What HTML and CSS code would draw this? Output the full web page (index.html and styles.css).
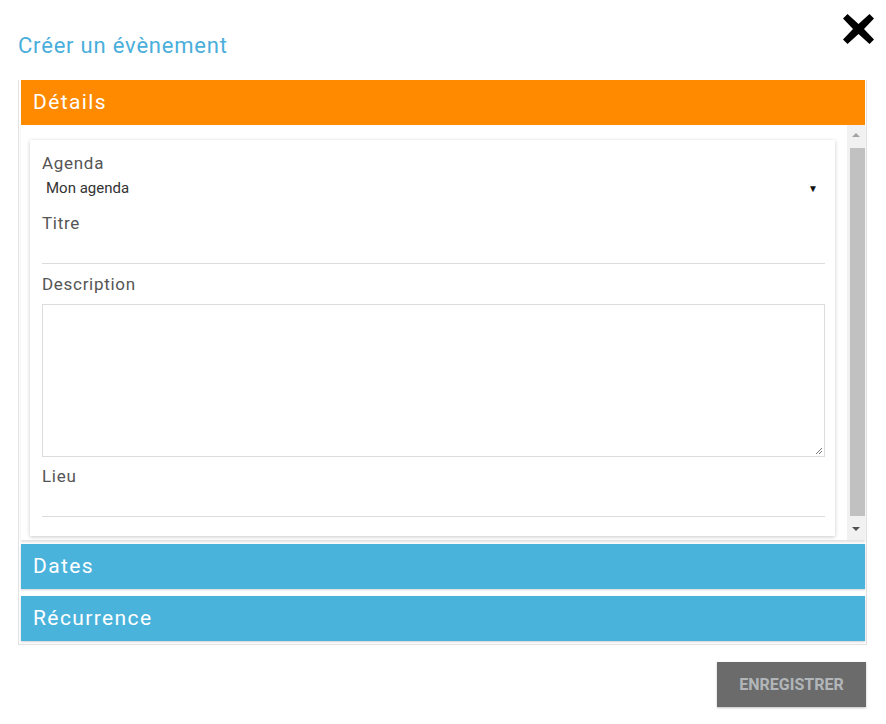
FILE: index.html
```html
<!DOCTYPE html>
<html lang="fr">
<head>
<meta charset="utf-8">
<title>Créer un évènement</title>
<link rel="stylesheet" href="styles.css">
</head>
<body>
<div class="dialog">
  <div class="dialog-head">
    <h1 class="dialog-title">Créer un évènement</h1>
    <button class="close-btn" aria-label="Fermer">
      <svg width="31" height="30" viewBox="0 0 31 30"><path d="M4.5 0 L15.5 10 L26.5 0 L31 4.5 L21 15 L31 25.5 L26.5 30 L15.5 20 L4.5 30 L0 25.5 L10 15 L0 4.5 Z" fill="#000"/></svg>
    </button>
  </div>
  <div class="accordion">
    <section class="panel">
      <div class="panel-head orange">Détails</div>
      <div class="panel-body">
        <div class="scroll-area">
          <div class="card">
            <label class="field-label">Agenda</label>
            <div class="select-row"><span>Mon agenda</span><span class="caret">▼</span></div>
            <label class="field-label spaced">Titre</label>
            <div class="line-input"></div>
            <label class="field-label spaced-sm">Description</label>
            <div class="textarea"><svg class="grip" width="8" height="8" viewBox="0 0 8 8"><path d="M7 1 L1 7 M7 4 L4 7" stroke="#777" stroke-width="1"/></svg></div>
            <label class="field-label spaced-xs">Lieu</label>
            <div class="line-input"></div>
          </div>
        </div>
        <div class="scrollbar">
          <div class="sb-arrow up"></div>
          <div class="sb-thumb"></div>
          <div class="sb-arrow down"></div>
        </div>
      </div>
    </section>
    <section class="panel gap-sm">
      <div class="panel-head blue">Dates</div>
    </section>
    <section class="panel gap-md">
      <div class="panel-head blue">Récurrence</div>
    </section>
  </div>
  <div class="actions">
    <button class="save-btn">ENREGISTRER</button>
  </div>
</div>
</body>
</html>
```
FILE: styles.css
```css
html, body {
  margin: 0;
  padding: 0;
  background: #fff;
}
body {
  font-family: Roboto, "Liberation Sans", Arial, sans-serif;
  width: 886px;
  height: 724px;
  overflow: hidden;
}
.dialog {
  padding: 0 19px 0 18px;
}
.dialog-head {
  height: 80px;
  display: flex;
  justify-content: space-between;
  align-items: flex-start;
}
.dialog-title {
  margin: 32px 0 0 0;
  font-size: 22px;
  line-height: 28px;
  font-weight: 400;
  letter-spacing: 0.8px;
  color: #4aaedb;
}
.close-btn {
  margin: 14px -7px 0 0;
  padding: 0;
  border: 0;
  background: none;
  display: block;
  line-height: 0;
}
.accordion {
  border: 1px solid #e2e2e2;
  border-top: 0;
  padding: 0 1px 3px 2px;
}
.panel-head {
  height: 45px;
  line-height: 45px;
  padding-left: 12px;
  color: #fff;
  font-size: 21px;
  letter-spacing: 1.4px;
  font-weight: 400;
}
.orange { background: #ff8a00; }
.blue {
  background: #4ab3dc;
  box-shadow: 0 1px 2px rgba(0,0,0,0.18);
}
.gap-sm { margin-top: 4px; }
.gap-md { margin-top: 7px; }
.panel-body {
  height: 415px;
  display: flex;
  box-shadow: 0 2px 2px rgba(0,0,0,0.12);
}
.scroll-area {
  flex: 1;
  overflow: hidden;
  padding: 15px 0 0 9px;
}
.card {
  width: 805px;
  height: 396px;
  box-sizing: border-box;
  background: #fff;
  box-shadow: 0 1px 4px rgba(0,0,0,0.22);
  padding: 13px 10px 0 12px;
  display: flex;
  flex-direction: column;
}
.field-label {
  font-size: 17px;
  line-height: 20px;
  letter-spacing: 0.7px;
  color: #555;
}
.spaced { margin-top: 15px; }
.spaced-sm { margin-top: 10px; }
.spaced-xs { margin-top: 9px; }
.select-row {
  margin-top: 5px;
  height: 20px;
  display: flex;
  justify-content: space-between;
  align-items: center;
  font-size: 15px;
  color: #333;
  padding: 0 7px 0 4px;
}
.caret {
  font-size: 10px;
  color: #111;
}
.line-input {
  height: 30px;
  border-bottom: 1px solid #dcdcdc;
}
.textarea {
  margin-top: 10px;
  height: 151px;
  border: 1px solid #dcdcdc;
  position: relative;
}
.grip {
  position: absolute;
  right: 1px;
  bottom: 1px;
}
.scrollbar {
  width: 18px;
  background: #f1f1f1;
  display: flex;
  flex-direction: column;
  align-items: center;
}
.sb-arrow {
  height: 20px;
  width: 100%;
  position: relative;
}
.sb-arrow.up::after,
.sb-arrow.down::after {
  content: "";
  position: absolute;
  left: 5px;
  border-left: 4px solid transparent;
  border-right: 4px solid transparent;
}
.sb-arrow.up::after {
  top: 8px;
  border-bottom: 4px solid #a3a3a3;
}
.sb-arrow.down::after {
  top: 7px;
  border-top: 4px solid #505050;
}
.sb-arrow.up { height: 23px; }
.sb-thumb {
  width: 15px;
  flex: 1;
  background: #c1c1c1;
  margin-bottom: 4px;
  margin-left: 2px;
}
.actions {
  display: flex;
  justify-content: flex-end;
  margin-top: 17px;
  margin-right: 1px;
}
.save-btn {
  width: 149px;
  height: 45px;
  border: 0;
  background: #6b6b6b;
  color: #b2b6b9;
  font-family: Roboto, "Liberation Sans", Arial, sans-serif;
  font-size: 16px;
  font-weight: 700;
  box-shadow: 0 1px 2px rgba(0,0,0,0.25);
  padding: 0;
}
```
